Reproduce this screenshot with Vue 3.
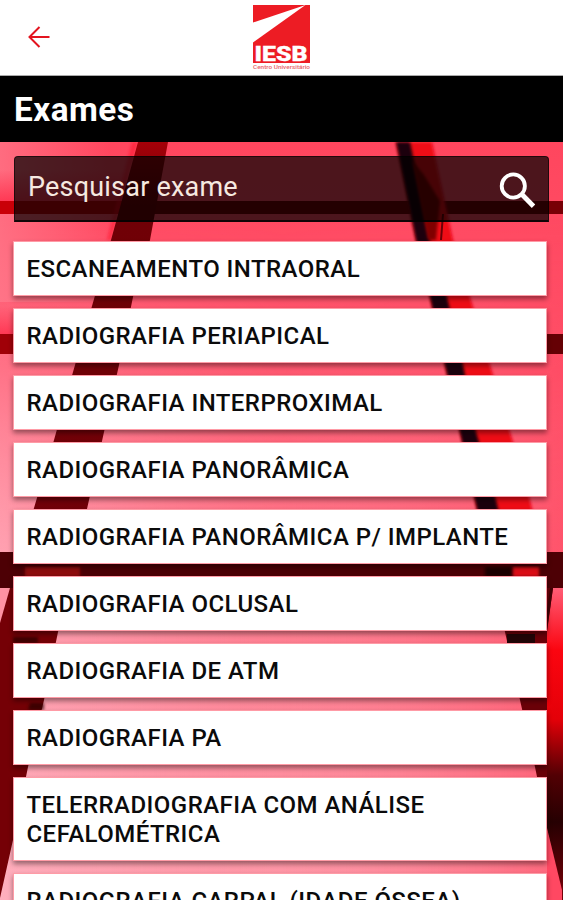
<script setup>
const exams = [
  'ESCANEAMENTO INTRAORAL',
  'RADIOGRAFIA PERIAPICAL',
  'RADIOGRAFIA INTERPROXIMAL',
  'RADIOGRAFIA PANORÂMICA',
  'RADIOGRAFIA PANORÂMICA P/ IMPLANTE',
  'RADIOGRAFIA OCLUSAL',
  'RADIOGRAFIA DE ATM',
  'RADIOGRAFIA PA',
  'TELERRADIOGRAFIA COM ANÁLISE CEFALOMÉTRICA',
  'RADIOGRAFIA CARPAL (IDADE ÓSSEA)',
]
</script>

<template>
  <div class="screen">
    <header class="topbar">
      <button class="back" aria-label="Voltar">
        <svg width="24" height="24" viewBox="0 0 24 24" fill="none" stroke="#e3141f" stroke-width="2">
          <path d="M22.5 12H2.5M12.5 2L2.5 12L12.5 22" />
        </svg>
      </button>
      <svg class="logo" width="60" height="68" viewBox="0 0 60 68">
        <rect x="1" y="1" width="57" height="58" fill="#ed1c24" />
        <path d="M1 18.5L53.5 1L1 38.5Z" fill="#fff" />
        <text x="2.5" y="57" class="logo-name" textLength="53" lengthAdjust="spacingAndGlyphs">IESB</text>
        <text x="1" y="65" class="logo-sub" textLength="57" lengthAdjust="spacingAndGlyphs">Centro Universitário</text>
      </svg>
    </header>
    <div class="title"><h1>Exames</h1></div>

    <main class="content">
      <svg class="backdrop" width="563" height="758" viewBox="0 142 563 758" preserveAspectRatio="none">
        <defs>
          <linearGradient id="wall" x1="0" y1="0" x2="0" y2="1">
            <stop offset="0" stop-color="#ff465e" />
            <stop offset=".3" stop-color="#ff526a" />
            <stop offset=".55" stop-color="#ff6f83" />
            <stop offset="1" stop-color="#ff9aa9" />
          </linearGradient>
          <linearGradient id="haze" x1="0" y1="0" x2="1" y2="0">
            <stop offset="0" stop-color="#ffb8c6" stop-opacity=".7" />
            <stop offset=".5" stop-color="#ff9aab" stop-opacity=".2" />
            <stop offset="1" stop-color="#ff3e58" stop-opacity=".55" />
          </linearGradient>
          <linearGradient id="fade" x1="0" y1="0" x2="0" y2="1">
            <stop offset="0" stop-color="#fff" stop-opacity="0" />
            <stop offset=".5" stop-color="#fff" />
          </linearGradient>
          <mask id="hazeMask"><rect y="210" width="563" height="690" fill="url(#fade)" /></mask>
          <linearGradient id="redden" x1="0" y1="0" x2="0" y2="1">
            <stop offset="0" stop-color="#ff1838" stop-opacity="0" />
            <stop offset="1" stop-color="#ff1838" stop-opacity=".6" />
          </linearGradient>
          <linearGradient id="cornerGlow" x1="0" y1="0" x2="1" y2="0">
            <stop offset="0" stop-color="#ff7c8e" stop-opacity=".7" />
            <stop offset="1" stop-color="#ff7c8e" stop-opacity="0" />
          </linearGradient>
          <linearGradient id="beamLeft" x1="0" y1="0" x2="0" y2="1">
            <stop offset="0" stop-color="#a50008" />
            <stop offset=".15" stop-color="#700006" />
            <stop offset="1" stop-color="#720008" />
          </linearGradient>
          <linearGradient id="sideRight" x1="0" y1="0" x2="0" y2="1">
            <stop offset="0" stop-color="#ff5d76" />
            <stop offset=".2" stop-color="#fb0510" />
            <stop offset=".42" stop-color="#e40008" />
            <stop offset=".6" stop-color="#520004" />
            <stop offset=".75" stop-color="#260002" />
            <stop offset="1" stop-color="#7a0008" />
          </linearGradient>
          <filter id="soft" x="-20%" y="-10%" width="140%" height="120%"><feGaussianBlur stdDeviation="1.5" /></filter>
        </defs>
        <rect y="142" width="563" height="758" fill="url(#wall)" />
        <rect y="210" width="563" height="690" fill="url(#haze)" mask="url(#hazeMask)" />
        <rect y="142" width="110" height="160" fill="url(#cornerGlow)" />
        <rect y="170" width="130" height="31" fill="url(#redden)" />
        <rect y="306" width="110" height="28" fill="url(#redden)" />
        <rect y="201" width="140" height="13" fill="#c90008" />
        <rect x="130" y="201" width="433" height="13" fill="#780006" />
        <rect y="334" width="13" height="20" fill="#a00008" />
        <rect x="13" y="334" width="550" height="20" fill="#650004" />
        <path d="M132 142H138L111 240H107Z" fill="#ff1028" opacity=".5" filter="url(#soft)" />
        <path d="M138 142H168L150 240L133 297L119 365L104 432L89 500L74 567H16L34 508L54 440L73 372L92 306L111 240Z" fill="url(#beamLeft)" />
        <path d="M396 142H432L453 240L470 297L490 365L510 432L530 500L545 567H490L475 500L460 432L445 365L430 297L416 240Z" fill="#ef0715" filter="url(#soft)" />
        <path d="M396 142H410L430 240L447 297L463 365L476 432L496 500L512 567H490L475 500L460 432L445 365L430 297L416 240Z" fill="#1c0507" filter="url(#soft)" />
        <path d="M412 160L424 175L440 201L436 240H428Z" fill="#800006" filter="url(#soft)" />
        <path d="M442 214H444L442 240H440Z" fill="#6b0006" />
        <rect y="552" width="563" height="36" fill="#4d0005" />
        <rect x="25" y="567" width="55" height="10" fill="#8e0c10" filter="url(#soft)" />
        <rect x="485" y="567" width="27" height="10" fill="#1d0506" filter="url(#soft)" />
        <rect x="513" y="567" width="26" height="10" fill="#dc0b15" filter="url(#soft)" />
        <path d="M0 588H69L58 632L44 700L28 767L13 840L0 898Z" fill="#750006" />
        <path d="M0 588H10L0 623Z" fill="#ff91a2" />
        <path d="M13 637H38V643H13ZM30 703H44V710H28Z" fill="#260606" opacity=".7" filter="url(#soft)" />
        <path d="M495 588H563V900H561L547 825L535 767L520 700L505 632Z" fill="#6b0008" />
        <path d="M507 634H535V643H507Z" fill="#220507" />
        <path d="M553 588H563V900L547 830V632Z" fill="url(#sideRight)" />
        <path d="M547 828L562 890V900H547Z" fill="#ff4862" />
        <path d="M550 588H553L547 630V610Z" fill="#420005" />
      </svg>

      <div class="search">
        <span>Pesquisar exame</span>
        <svg width="38" height="38" viewBox="0 0 38 38" fill="none" stroke="#fff">
          <circle cx="15.3" cy="15" r="11.6" stroke-width="3.8" />
          <path d="M24 23.5L35.5 35.2" stroke-width="4.8" />
        </svg>
      </div>
      <ul class="list">
        <li v-for="exam in exams" :key="exam" class="exam">{{ exam }}</li>
      </ul>
    </main>
  </div>
</template>

<style>
body {
  overflow: hidden;
}
</style>

<style scoped>
.screen {
  width: 563px;
  height: 900px;
  overflow: hidden;
  display: flex;
  flex-direction: column;
  background: #fff;
  font-family: Roboto, "Liberation Sans", sans-serif;
}
.topbar {
  box-sizing: border-box;
  height: 76px;
  flex: none;
  display: grid;
  grid-template-columns: 1fr 60px 1fr;
  align-items: start;
  border-bottom: 1px solid #aaa;
}
.back {
  justify-self: start;
  margin: 25px 0 0 27px;
  padding: 0;
  border: 0;
  background: none;
  line-height: 0;
}
.logo {
  margin-top: 4px;
  overflow: visible;
}
.logo-name {
  font: 900 21px Roboto, sans-serif;
  fill: #fff;
  stroke: #fff;
  stroke-width: 0.3;
}
.logo-sub {
  font: 500 5.5px Roboto, sans-serif;
  fill: #e9636a;
}
.title {
  height: 66px;
  flex: none;
  display: flex;
  align-items: center;
  padding-left: 14px;
  background: #000;
}
h1 {
  margin: 2px 0 0;
  color: #fff;
  font-size: 33.3px;
  font-weight: 700;
  line-height: 40px;
  letter-spacing: 0.5px;
}
.content {
  position: relative;
  flex: 1;
  min-height: 0;
  padding: 14px 14px 0 13px;
  overflow: hidden;
}
.backdrop {
  position: absolute;
  inset: 0;
}
.search {
  position: relative;
  box-sizing: border-box;
  height: 66px;
  margin: 0 0 0 1px;
  width: 535px;
  display: flex;
  align-items: center;
  justify-content: space-between;
  padding: 0 12px 0 13px;
  border: 1px solid rgba(0, 0, 0, 0.55);
  border-bottom: 2px solid rgba(0, 0, 0, 0.8);
  border-radius: 4px 4px 0 0;
  background: rgba(0, 0, 0, 0.7);
  color: #f6e9e0;
  font-size: 27px;
  letter-spacing: 0.2px;
}
.search span {
  padding-bottom: 3px;
}
.search svg {
  margin-top: 2px;
}
.list {
  position: relative;
  display: flex;
  flex-direction: column;
  gap: 12px;
  margin: 19px 0 0;
  padding: 0;
  list-style: none;
}
.exam {
  box-sizing: border-box;
  width: 534px;
  padding: 13px 12.5px 11px;
  border: 1px solid #ff9ba6;
  background: #fff;
  background-clip: padding-box;
  box-shadow: 0 3px 5px rgba(0, 0, 0, 0.42);
  color: #0b0b0b;
  font-size: 24px;
  font-weight: 500;
  line-height: 29.05px;
  letter-spacing: 0.45px;
}
</style>
